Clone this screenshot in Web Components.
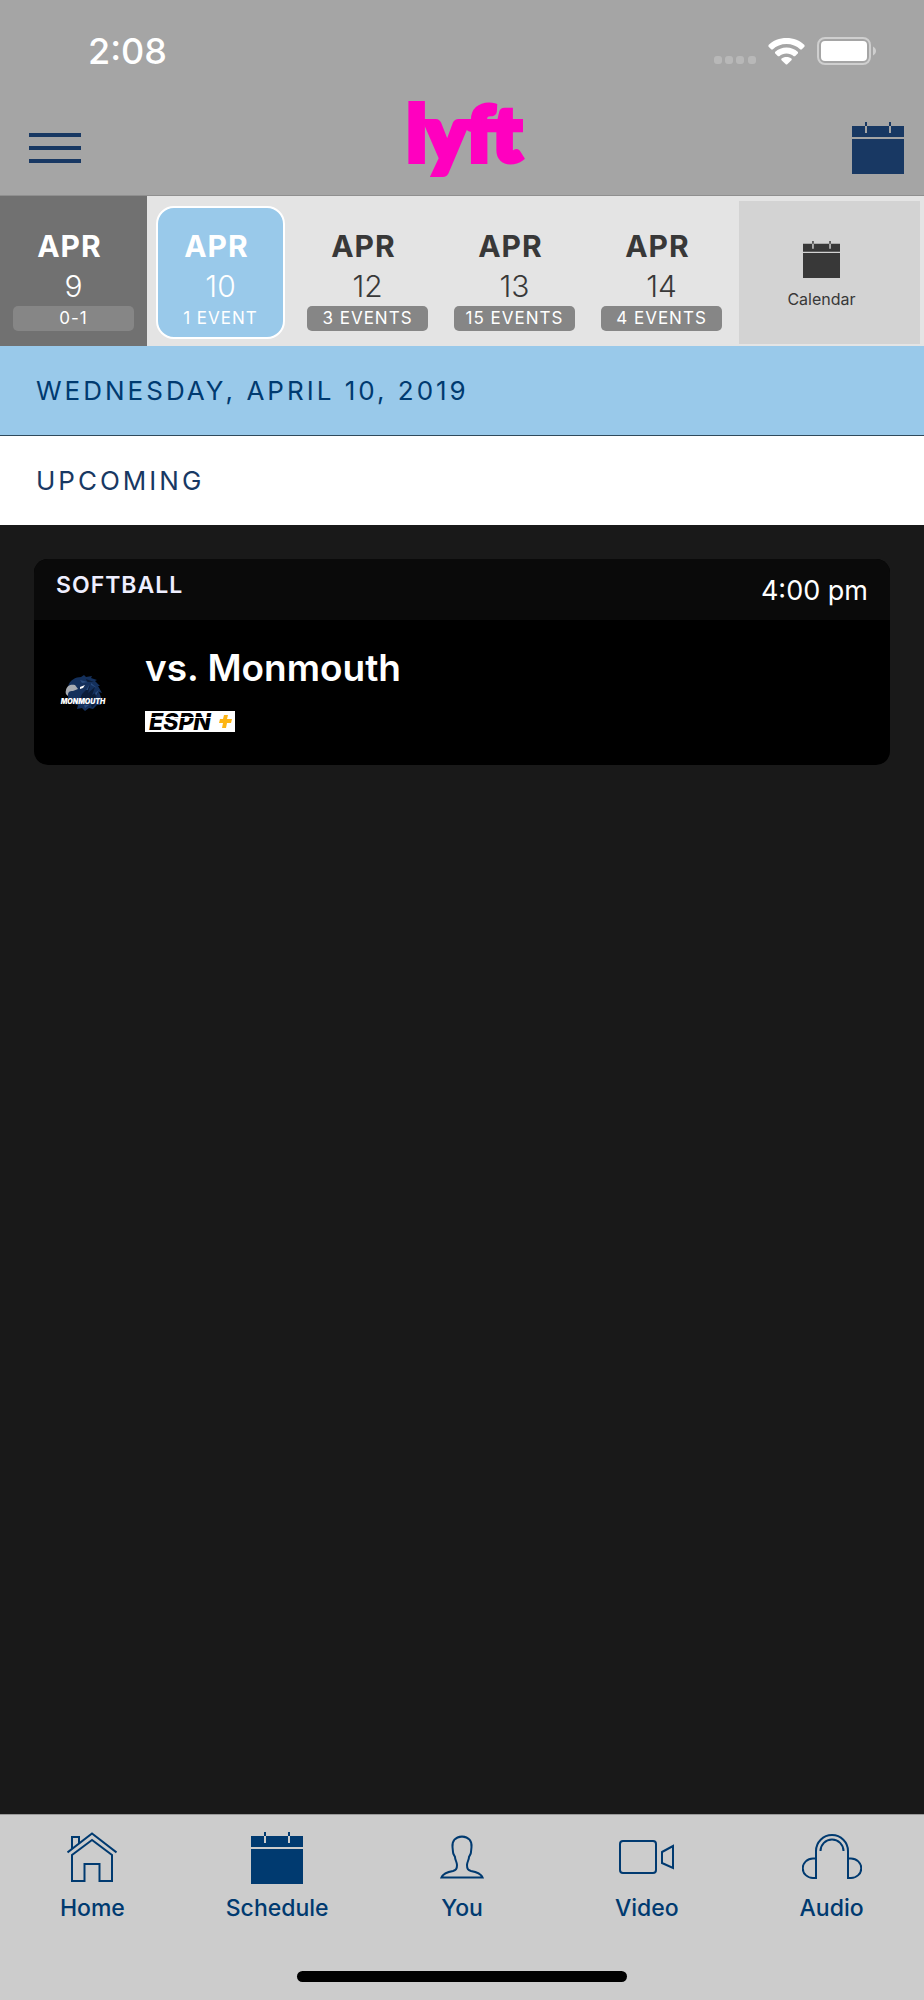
<!DOCTYPE html>
<html lang="en">
<head>
<meta charset="utf-8">
<meta name="viewport" content="width=device-width, initial-scale=1">
<title>Schedule</title>
<style>
  html, body {
    margin: 0;
  }
  body {
    font-family: Inter, "Liberation Sans", sans-serif;
    --navy: #183863;
    --blue: #003a70;
    --sky: #99c9ea;
  }
</style>
</head>
<body>
<schedule-app></schedule-app>

<script>
const icons = {
  menu: `<svg viewBox="0 0 52 32" width="52" height="32" fill="currentColor">
    <path d="M0 1h52v4H0zM0 14h52v4H0zM0 27h52v4H0z"/></svg>`,
  calendar: `<svg viewBox="0 0 52 52" width="52" height="52" fill="currentColor">
    <path d="M0 4h13v7h2V4h22v7h2V4h13v11H0zM0 17h52v35H0zM13 0h2v4h-2zM37 0h2v4h-2z"/></svg>`,
  home: `<svg viewBox="0 0 50 52" width="50" height="52" fill="none" stroke="currentColor" stroke-width="2">
    <path d="M.5 20.5 25 1.500 49.500 20.500M25 8 5 23v26h12.500V32h15v17h12.500V23zM5 17V5h7v6.500"/></svg>`,
  person: `<svg viewBox="0 0 50 52" width="50" height="52" fill="none" stroke="currentColor" stroke-width="2">
    <path d="M25 4.500C18 5 15 9 15.500 15l.5 5c0 2 1 3 2 5 0 3 2 5 2 8 0 4-1 5-4 6-6 1-10 3-11.500 6.500h41C44 42 40 40 34 39c-3-1-4-2-4-6 0-3 2-5 2-8 1-2 2-3 2-5l.5-5C35 9 32 5 25 4.500z"/></svg>`,
  video: `<svg viewBox="0 0 56 52" width="56" height="52" fill="none" stroke="currentColor" stroke-width="2">
    <rect x="1" y="9" width="36" height="32" rx="3"/><path d="M43 20l11-6v22L43 31z"/></svg>`,
  audio: `<svg viewBox="0 0 60 52" width="60" height="52" fill="none" stroke="currentColor" stroke-width="2">
    <path d="M14 47V19a16 16 0 0 1 32 0v28M18.500 19a11.500 11.500 0 0 1 23 0M14 26.500h-3a10 9.500 0 0 0 0 19.500h3M46 26.500h3a10 9.500 0 0 1 0 19.500h-3"/></svg>`
};

class AppIcon extends HTMLElement {
  constructor() {
    super();
    this.attachShadow({ mode: 'open' });
  }

  connectedCallback() {
    this.shadowRoot.innerHTML = `
    <style>
    :host { display: block; }
    svg { display: block; width: var(--icon-size, auto); height: var(--icon-size, auto); }
    </style>
    ${icons[this.getAttribute('name')]}
    `;
  }
}

class StatusBar extends HTMLElement {
  constructor() {
    super();
    this.attachShadow({ mode: 'open' }).innerHTML = `
    <style>
    :host {
      display: flex;
      justify-content: space-between;
      align-items: center;
      height: 101px;
      padding: 0 47px 0 88px;
      color: #fff;
    }
    time { font-size: 36px; font-weight: 500; line-height: 44px; }
    .signals { display: flex; align-items: center; gap: 12px; }
    svg { display: block; }
    </style>
    <time>2:08</time>
    <div class="signals">
      <svg width="42" height="28" viewBox="0 0 42 28" fill="#b8b8b8">
        <rect x="0" y="19" width="8" height="8" rx="3"/>
        <rect x="11" y="19" width="8" height="8" rx="3"/>
        <rect x="22" y="19" width="8" height="8" rx="3"/>
        <rect x="34" y="19" width="8" height="8" rx="3"/>
      </svg>
      <svg width="37" height="28" viewBox="0 0 37 28" fill="#fff">
        <path d="M18.500 1C11.500 1 5 3.500.5 8l-.1 1.500 3 2.900h1.200C8.500 9 13 7 18.500 7s10 2 13.900 5.400h1.200l3-2.900-.1-1.500C32 3.500 25.500 1 18.500 1z"/>
        <path d="M18.500 10.500c-4.300 0-8.300 1.600-11.500 4.500v1.300l3 2.900h1.300c2-1.700 4.500-2.700 7.200-2.700s5.200 1 7.200 2.700H27l3-2.900V15c-3.200-2.900-7.200-4.500-11.500-4.500z"/>
        <path d="M18.500 20c-2 0-3.800.6-5.200 1.700V23l4.700 4.500h1l4.700-4.500v-1.300C22.300 20.600 20.500 20 18.500 20z"/>
      </svg>
      <svg width="60" height="28" viewBox="0 0 60 28">
        <rect x="1" y="1" width="52" height="26" rx="7" fill="none" stroke="#cfcfcf" stroke-width="2"/>
        <rect x="4" y="4" width="46" height="20" rx="4" fill="#fff"/>
        <path d="M56 9.500c4 2 4 7 0 9z" fill="#cfcfcf"/>
      </svg>
    </div>
    `;
  }
}

class AppHeader extends HTMLElement {
  constructor() {
    super();
    this.attachShadow({ mode: 'open' }).innerHTML = `
    <style>
    :host {
      display: block;
      background: #a5a5a5;
      border-bottom: 1px solid #8f8f8f;
    }
    .bar {
      display: grid;
      grid-template-columns: 1fr auto 1fr;
      align-items: center;
      height: 94px;
      padding: 0 20px 0 29px;
    }
    button {
      padding: 0;
      border: 0;
      background: none;
      color: var(--navy);
      justify-self: start;
      cursor: pointer;
    }
    button:last-child { justify-self: end; }
    svg { display: block; overflow: visible; }
    text {
      font-family: Lato, Inter, sans-serif;
      font-size: 76px;
      font-weight: 900;
      fill: #ff00bf;
      stroke: #ff00bf;
      stroke-width: 6px;
    }
    </style>
    <status-bar></status-bar>
    <div class="bar">
      <button type="button" aria-label="Menu"><app-icon name="menu"></app-icon></button>
      <svg width="116" height="80" viewBox="0 0 116 80" role="img" aria-label="lyft">
        <text x="55" y="53" text-anchor="middle">lyft</text>
      </svg>
      <button type="button" aria-label="Open calendar"><app-icon name="calendar"></app-icon></button>
    </div>
    `;
  }
}

class DayTab extends HTMLElement {
  constructor() {
    super();
    this.attachShadow({ mode: 'open' }).innerHTML = `
    <style>
    :host {
      display: block;
      padding: 10px 9px 7px;
      color: #383838;
    }
    :host([past]) { background: #717171; color: #fff; }
    :host([selected]) { color: #fff; }
    button {
      display: flex;
      flex-direction: column;
      align-items: center;
      box-sizing: border-box;
      width: 100%;
      height: 133px;
      padding: 18px 2px 0;
      border: 2px solid transparent;
      border-radius: 18px;
      background: none;
      color: inherit;
      font-family: inherit;
      font-size: 30px;
      line-height: 40px;
      cursor: pointer;
    }
    :host([selected]) button { background: var(--sky); border-color: #fff; }
    .month { padding-right: 8px; font-weight: 700; letter-spacing: 1px; }
    .day { font-weight: 300; }
    .count {
      align-self: stretch;
      border-radius: 5px;
      background: #868686;
      color: #fff;
      font-size: 17px;
      line-height: 25px;
      letter-spacing: 1px;
      white-space: nowrap;
    }
    :host([selected]) .count { background: none; }
    </style>
    <button type="button">
      <span class="month"><slot name="month"></slot></span>
      <span class="day"><slot name="day"></slot></span>
      <span class="count"><slot></slot></span>
    </button>
    `;
  }
}

class DayStrip extends HTMLElement {
  constructor() {
    super();
    this.attachShadow({ mode: 'open' }).innerHTML = `
    <style>
    :host {
      display: grid;
      grid-template-columns: repeat(5, 147fr) 189fr;
      background: #e4e4e4;
    }
    .calendar {
      display: flex;
      flex-direction: column;
      align-items: center;
      justify-content: center;
      gap: 10px;
      margin: 5px 4px 2px;
      padding: 6px 16px 0 0;
      border: 0;
      background: #d3d3d3;
      color: #383838;
      font: 16px/22px Inter, sans-serif;
      cursor: pointer;
      --icon-size: 37px;
    }
    </style>
    <slot></slot>
    <button class="calendar" type="button"><app-icon name="calendar"></app-icon>Calendar</button>
    `;
  }
}

class SectionBanner extends HTMLElement {
  constructor() {
    super();
    this.attachShadow({ mode: 'open' }).innerHTML = `
    <style>
    :host {
      display: block;
      padding: 0 36px;
      background: #fff;
      color: var(--navy);
    }
    :host([accent]) {
      background: var(--sky);
      border-bottom: 1px solid #2f4a5c;
      color: var(--blue);
    }
    h2 {
      margin: 0;
      font-size: 26px;
      font-weight: 400;
      line-height: 89px;
      letter-spacing: 3px;
    }
    </style>
    <h2><slot></slot></h2>
    `;
  }
}

class EventCard extends HTMLElement {
  constructor() {
    super();
    this.attachShadow({ mode: 'open' }).innerHTML = `
    <style>
    :host {
      display: block;
      overflow: hidden;
      border-radius: 14px;
      background: #000;
      color: #fff;
    }
    header {
      display: flex;
      justify-content: space-between;
      padding: 10px 22px 0;
      height: 51px;
      background: #0a0a0a;
    }
    .sport {
      font-size: 23px;
      font-weight: 600;
      line-height: 32px;
      letter-spacing: 1px;
      color: #efefff;
    }
    .time { font-size: 27px; line-height: 44px; }
    .body {
      display: flex;
      align-items: center;
      gap: 37px;
      height: 145px;
      padding: 0 26px;
    }
    .info { padding-bottom: 8px; }
    h3 { margin: 0 0 20px; font-size: 37px; font-weight: 600; line-height: 46px; }
    svg { display: block; }
    .team text { font: italic 900 7px Inter, sans-serif; fill: #fff; }
    .espn text { font: italic 800 23px Inter, sans-serif; fill: #000; }
    </style>
    <header>
      <span class="sport"><slot name="sport"></slot></span>
      <span class="time"><slot name="time"></slot></span>
    </header>
    <div class="body">
      <svg class="team" width="48" height="38" viewBox="0 0 48 38" role="img" aria-label="Monmouth Hawks">
        <path fill="#14305c" d="M8 13C9 6 16 3 21 3l3-2 2 2 6-1-1 2 6 2-2 1 5 5-2 0 4 7-3-1 2 5v8l-4 0-4 4-4-1-4 3-3-3-5 1 1-4-4-1-6-6z"/>
        <path fill="#0b1c38" d="M22 20l8-8-2 7 7-6-3 8 7-4-4 8H20zM26 5l8 3-7 0zM31 31l5-2-4 5z"/>
        <path fill="#294b7d" d="M20 6l8 2-6 1zM31 9l6 5-6-3zM26 16l3-5-1 5zM35 19l4-3-3 6zM24 31l5 0-4 3z"/>
        <path fill="#a8acb2" d="M6 16c1-5 5-6 9-5l3 4-5 2c-4 0-5 1-5 5-2-1-3-3-2-6z"/>
        <path fill="#fff" d="M20 13l5-2-2 3-3 1z"/>
        <text x="23" y="30" text-anchor="middle">MONMOUTH</text>
      </svg>
      <div class="info">
        <h3><slot name="title"></slot></h3>
        <svg class="espn" width="90" height="21" viewBox="0 0 90 21" role="img" aria-label="ESPN+">
          <path fill="#fff" d="M0 0h90v21H0z"/>
          <text x="4" y="19">ESPN</text>
          <path fill="#fff" d="M0 6h72v1H0z"/>
          <path fill="#fdb515" d="M79 4h4l-1 4h5l-1 4h-4l-1 5h-4l1-5h-4l1-4h3z"/>
        </svg>
      </div>
    </div>
    `;
  }
}

class TabItem extends HTMLElement {
  constructor() {
    super();
    this.attachShadow({ mode: 'open' });
  }

  connectedCallback() {
    const icon = this.getAttribute('icon');
    this.shadowRoot.innerHTML = `
    <style>
    :host { display: block; }
    a {
      display: flex;
      flex-direction: column;
      align-items: center;
      gap: 10px;
      color: var(--blue);
      font-size: 23px;
      font-weight: 500;
      line-height: 28px;
      text-decoration: none;
    }
    </style>
    <a href="#${icon}"><app-icon name="${icon}"></app-icon><slot></slot></a>
    `;
  }
}

class TabBar extends HTMLElement {
  constructor() {
    super();
    this.attachShadow({ mode: 'open' }).innerHTML = `
    <style>
    :host {
      display: block;
      padding: 17px 0 18px;
      border-top: 1px solid #999;
      background: #ccc;
    }
    nav { display: grid; grid-template-columns: repeat(5, 1fr); }
    .indicator {
      width: 330px;
      height: 11px;
      margin: 49px auto 0;
      border-radius: 6px;
      background: #000;
    }
    </style>
    <nav><slot></slot></nav>
    <div class="indicator"></div>
    `;
  }
}

class ScheduleApp extends HTMLElement {
  constructor() {
    super();
    this.attachShadow({ mode: 'open' }).innerHTML = `
    <style>
    :host {
      display: flex;
      flex-direction: column;
      min-height: 100vh;
      background: #191919;
    }
    main { flex: 1; }
    .events { padding: 34px; }
    </style>
    <app-header></app-header>
    <day-strip>
      <day-tab past><span slot="month">APR</span><span slot="day">9</span>0-1</day-tab>
      <day-tab selected><span slot="month">APR</span><span slot="day">10</span>1 EVENT</day-tab>
      <day-tab><span slot="month">APR</span><span slot="day">12</span>3 EVENTS</day-tab>
      <day-tab><span slot="month">APR</span><span slot="day">13</span>15 EVENTS</day-tab>
      <day-tab><span slot="month">APR</span><span slot="day">14</span>4 EVENTS</day-tab>
    </day-strip>
    <main>
      <section-banner accent>WEDNESDAY, APRIL 10, 2019</section-banner>
      <section-banner>UPCOMING</section-banner>
      <div class="events">
        <event-card>
          <span slot="sport">SOFTBALL</span>
          <span slot="time">4:00 pm</span>
          <span slot="title">vs. Monmouth</span>
        </event-card>
      </div>
    </main>
    <tab-bar>
      <tab-item icon="home">Home</tab-item>
      <tab-item icon="calendar">Schedule</tab-item>
      <tab-item icon="person">You</tab-item>
      <tab-item icon="video">Video</tab-item>
      <tab-item icon="audio">Audio</tab-item>
    </tab-bar>
    `;
  }
}

customElements.define('app-icon', AppIcon);
customElements.define('status-bar', StatusBar);
customElements.define('app-header', AppHeader);
customElements.define('day-tab', DayTab);
customElements.define('day-strip', DayStrip);
customElements.define('section-banner', SectionBanner);
customElements.define('event-card', EventCard);
customElements.define('tab-item', TabItem);
customElements.define('tab-bar', TabBar);
customElements.define('schedule-app', ScheduleApp);
</script>
</body>
</html>
